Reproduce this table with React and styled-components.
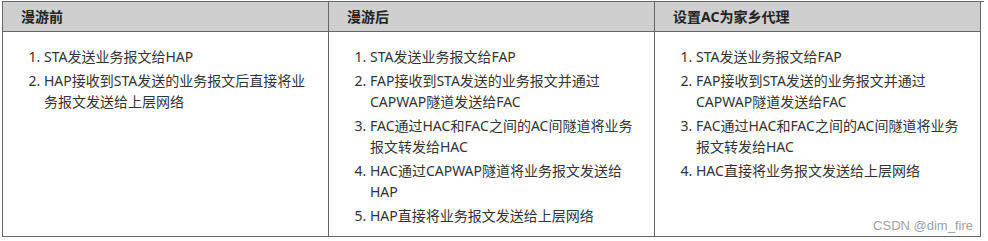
import React from "react";
import styled, { createGlobalStyle } from "styled-components";

const Global = createGlobalStyle`
  html, body { margin: 0; padding: 0; background: #fff; }
  body {
    font-family: "Noto Sans", "Noto Sans CJK SC", sans-serif;
    font-size: 14px;
    color: #333;
  }
`;

const Page = styled.div`
  position: relative;
  width: 988px;
  height: 241px;
  padding: 1px 0 0 2px;
  box-sizing: border-box;
`;

const Table = styled.div`
  display: grid;
  grid-template-columns: repeat(3, 326px);
  width: 982px;
  box-sizing: border-box;
  border-left: 1px solid #666;
  border-top: 1px solid #666;
`;

const HeaderCell = styled.div`
  box-sizing: border-box;
  height: 30px;
  padding: 4px 18px 0;
  line-height: 22px;
  font-weight: 700;
  color: #222;
  background: #cfcfcf;
  border-right: 1px solid #666;
  border-bottom: 1px solid #666;
`;

const BodyCell = styled.div`
  box-sizing: border-box;
  height: 205px;
  padding: 14px 18px 0;
  border-right: 1px solid #666;
  border-bottom: 1px solid #666;
`;

const Steps = styled.ol`
  margin: 0;
  padding: 0 0 0 23px;
  list-style: decimal outside;
`;

const Step = styled.li`
  line-height: 21px;
  & + & { margin-top: 3px; }
`;

const Watermark = styled.div`
  position: absolute;
  right: 15px;
  top: 218px;
  font-family: "Liberation Sans", Arial, sans-serif;
  font-size: 13px;
  line-height: 16px;
  color: #a0a0a0;
`;

const columns = [
  {
    title: "漫游前",
    steps: ["STA发送业务报文给HAP", "HAP接收到STA发送的业务报文后直接将业务报文发送给上层网络"],
  },
  {
    title: "漫游后",
    steps: [
      "STA发送业务报文给FAP",
      "FAP接收到STA发送的业务报文并通过CAPWAP隧道发送给FAC",
      "FAC通过HAC和FAC之间的AC间隧道将业务报文转发给HAC",
      "HAC通过CAPWAP隧道将业务报文发送给HAP",
      "HAP直接将业务报文发送给上层网络",
    ],
  },
  {
    title: "设置AC为家乡代理",
    steps: [
      "STA发送业务报文给FAP",
      "FAP接收到STA发送的业务报文并通过CAPWAP隧道发送给FAC",
      "FAC通过HAC和FAC之间的AC间隧道将业务报文转发给HAC",
      "HAC直接将业务报文发送给上层网络",
    ],
  },
];

export default function App() {
  return (
    <Page>
      <Global />
      <Table>
        {columns.map((c) => (
          <HeaderCell key={"h" + c.title}>{c.title}</HeaderCell>
        ))}
        {columns.map((c) => (
          <BodyCell key={"b" + c.title}>
            <Steps>
              {c.steps.map((s, i) => (
                <Step key={i}>{s}</Step>
              ))}
            </Steps>
          </BodyCell>
        ))}
      </Table>
      <Watermark>CSDN @dim_fire</Watermark>
    </Page>
  );
}
